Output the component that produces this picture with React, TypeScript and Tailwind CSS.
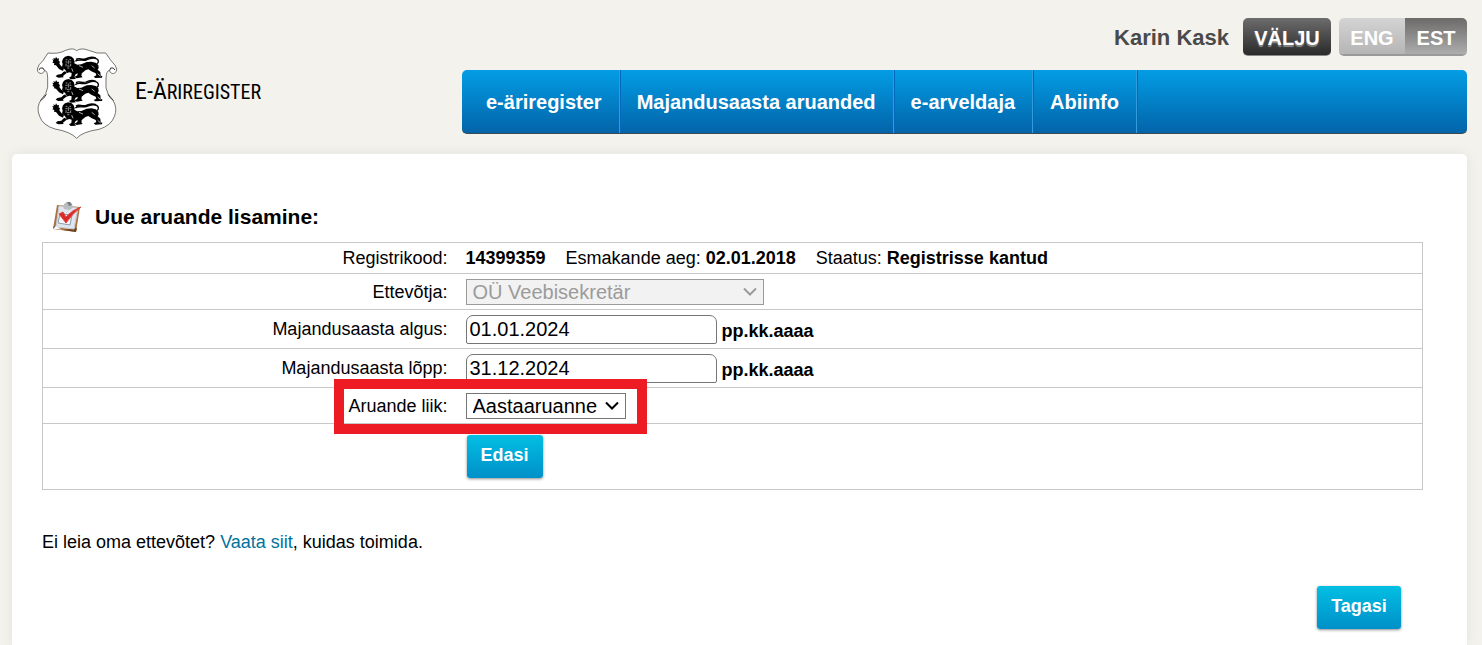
import type { ReactNode } from "react";

const navItems = ["e-äriregister", "Majandusaasta aruanded", "e-arveldaja", "Abiinfo"];

function Lion({ y }: { y: number }) {
  return (
    <g transform={`translate(0 ${y})`}>
      {/* raised paw and foreleg */}
      <path d="M67 46l5 1-2-6 6 3 2-6 4 6 5-1-1 7 4 3-2 6 6 8 8 5-3 9-12-6-9-11-6-1 1-5-6-2 3-4z" />
      {/* body and legs */}
      <path d="M100 68l14 12 12-8 4-16 12 6 12-1 16-7 14-1 13 3 8 7 1 9-3 5 8 7 1 11 5 1-1 5-20 1-5-4 8-4-2-6-13-6-9-6-9 3-9 8-3 8 4 5-18 3-7-4 9-5 1-6-6 3-4 8 5 6-16 1-5-5 7-4 1-10-7-2-9 3-10 8 2 4-16 1-8-4 5-5 12-2 7-7 8-3z" />
      {/* mane */}
      <path d="M99 44l6-6 10-3 10 3 6 6 3 9-2 7 2 8-6 6-6 6-7 4-7-4-6-6-6-6 2-8-2-7z" />
      <path d="M136 52c8-8 22-1 32-4 10-3 18-8 28-5 12 3 11 14 4 17M138 46c10-7 18 3 30-2 10-5 20-6 30-2" fill="none" stroke="#000" strokeWidth="4" />
      {/* face */}
      <path d="M107 47h5m6 0h5M106 54h6m6 0h6M115 49v12M108 59v8m14-8v8M111 66h8M112 72h6" fill="none" stroke="#ddd" strokeWidth="2" />
      <path d="M104 80l6 5m15-12l4 10m-56 10l10-3m64-25l12 5m26-5l9 7m-40 18l8-5m41 4l9 8" fill="none" stroke="#fff" strokeWidth="2" />
    </g>
  );
}

function CoatOfArms() {
  return (
    <svg viewBox="0 0 285 300" className="h-[100px] w-[95px] shrink-0" aria-hidden="true">
      <path
        d="M54 27Q85 31 107 19Q130 10 140 20Q154 10 176 19Q201 31 227 27L243 50Q259 65 260 75C260 92 240 93 239 79Q229 80 228 102V132Q231 151 248 167Q264 193 253 218Q243 245 207 256Q157 263 140 283Q122 263 75 255Q38 244 29 217Q17 190 34 166Q51 150 53 130V102Q53 80 43 79C41 93 21 91 22 75Q24 62 39 50Z"
        fill="#fff"
        stroke="#333"
        strokeWidth="2"
      />
      <path d="M27 78q2-9 12-6l4 7m212-1q-4-9-13-6l-3 7M31 170q11-6 18-19m201 18q-11-7-16-18" fill="none" stroke="#333" strokeWidth="3" />
      <Lion y={0} />
      <Lion y={70} />
      <Lion y={140} />
    </svg>
  );
}

function ClipboardIcon() {
  return (
    <svg viewBox="0 0 30 32" className="h-8 w-[30px] shrink-0" aria-hidden="true">
      <path d="M5 4L28 6L24 31L1 28Z" fill="#a87243" />
      <path d="M4 27L1 28L2 25ZM11 29L24 31L25 27Z" fill="#6f4422" />
      <path d="M7 5L26 7L22 28L4 26Z" fill="#dfe6f0" stroke="#c9ced6" />
      <path d="M4 25L10 29L6 28L1 28Z" fill="#f5f8fc" />
      <path d="M8 13L20 14L18 24L6 22Z" fill="#f4f6f9" stroke="#8f99a6" />
      <path d="M11 5L13 2Q18-1 20 3L21 6L18 9L12 8Z" fill="#b9bdc1" />
      <path d="M15 1h3l2 3-3 1z" fill="#777c80" />
      <path d="M7 13L11 11L14 16Q20 9 29 6Q20 13 14 22Z" fill="#d92a2a" stroke="#e2463f" strokeWidth="1" />
    </svg>
  );
}

function Chevron() {
  return (
    <svg
      viewBox="0 0 14 9"
      className="pointer-events-none absolute top-1/2 right-[7px] h-[9px] w-[14px] -translate-y-1/2"
      fill="none"
      stroke="currentColor"
      strokeWidth="2"
      aria-hidden="true"
    >
      <path d="M1 1L7 7L13 1" />
    </svg>
  );
}

function Row({ label, htmlFor, className, children }: { label?: string; htmlFor?: string; className: string; children: ReactNode }) {
  return (
    <tr className={className}>
      <th scope="row" className="w-[30%] border-y border-[#c8c8c8] pr-[9px] text-right font-normal">
        {label && <label htmlFor={htmlFor}>{label}</label>}
      </th>
      <td className="relative border-y border-[#c8c8c8] pl-[9px]">{children}</td>
    </tr>
  );
}

const dateInput =
  "h-[29px] w-[251px] rounded-t-[7px] rounded-b-xs border border-[#767676] bg-white px-[3px] text-xl leading-6";
const blueButton =
  "h-[43px] rounded-[3px] bg-linear-to-b from-[#04bfe3] to-[#0190c9] pb-[3px] font-bold text-white shadow-[0_1px_3px_rgba(0,0,0,0.45)]";

export default function App() {
  return (
    <div className="flex min-h-screen flex-col bg-[#f3f2ec] pr-[15px] pl-3 font-['Liberation_Sans',Arial,sans-serif] text-lg leading-6 text-black">
      <header className="flex">
        <a href="#" className="flex w-[450px] shrink-0 items-center pt-11 pb-[10px] pl-[18px] text-black">
          <CoatOfArms />
          <span className="ml-[10px] pb-[6px] font-['Roboto_Condensed',Roboto,sans-serif] text-xl">
            <span className="text-2xl">E-Ä</span>RIREGISTER
          </span>
        </a>
        <div className="min-w-0 flex-1">
          <div className="flex items-center justify-end pt-[18px] pb-[14px]">
            <span className="mr-[14px] pt-[2px] text-[22px] font-bold text-[#4a4a4a]">Karin Kask</span>
            <button className="mr-2 h-[38px] w-[88px] rounded-[5px] border-b border-[#888] bg-linear-to-b from-[#6d6d6d] to-[#2b2b2b] pt-[2px] text-xl font-bold text-white [text-shadow:0_2px_1px_#888]">
              VÄLJU
            </button>
            <div className="flex h-[38px] overflow-hidden rounded-[5px] border-b-2 border-[#999] text-xl font-bold text-white [text-shadow:0_2px_1px_#888]">
              <button className="w-[66px] bg-linear-to-b from-[#d4d4d4] to-[#b5b5b5] pt-[3px]">ENG</button>
              <button className="w-[62px] bg-linear-to-b from-[#6c6b6a] to-[#adadad] pt-[3px]">EST</button>
            </div>
          </div>
          <nav className="rounded-[5px] border-b border-[#3a4a55] bg-linear-to-b from-[#039de5] to-[#0364a9]">
            <ul className="flex h-[63px] pl-[7px] text-xl font-bold text-white">
              {navItems.map((item) => (
                <li key={item} className="flex border-r border-[#359bdc] shadow-[1px_0_0_#0566bd]">
                  <a href="#" className="flex items-center px-[17px] pt-px whitespace-nowrap">
                    {item}
                  </a>
                </li>
              ))}
            </ul>
          </nav>
        </div>
      </header>

      <main className="flex-1 rounded-t-[5px] bg-white pt-[47px] pr-11 pb-4 pl-[30px] shadow-[0_0_14px_rgba(0,0,0,0.07)]">
        <h1 className="mb-[9px] flex items-center gap-[13px] pl-[10px] text-[21px] font-bold">
          <ClipboardIcon />
          Uue aruande lisamine:
        </h1>
        <form>
          <table className="w-full border-collapse border border-[#c8c8c8]">
            <tbody>
              <Row label="Registrikood:" className="h-[31px]">
                <b className="mr-5">14399359</b>
                <span className="mr-5">
                  Esmakande aeg: <b>02.01.2018</b>
                </span>
                <span>
                  Staatus: <b>Registrisse kantud</b>
                </span>
              </Row>
              <Row label="Ettevõtja:" htmlFor="company" className="h-9">
                <div className="relative flex w-[298px] text-[#9b9b9b]">
                  <select
                    id="company"
                    disabled
                    className="h-[26px] w-full appearance-none border border-[#9b9b9b] bg-[#f2f2f2] pl-[6px] text-xl leading-6 opacity-100"
                  >
                    <option>OÜ Veebisekretär</option>
                  </select>
                  <Chevron />
                </div>
              </Row>
              <Row label="Majandusaasta algus:" htmlFor="start" className="h-[39px]">
                <div className="flex items-center gap-[5px]">
                  <input id="start" type="text" defaultValue="01.01.2024" className={dateInput} />
                  <b className="pt-[3px]">pp.kk.aaaa</b>
                </div>
              </Row>
              <Row label="Majandusaasta lõpp:" htmlFor="end" className="h-[39px]">
                <div className="flex items-center gap-[5px]">
                  <input id="end" type="text" defaultValue="31.12.2024" className={dateInput} />
                  <b className="pt-[3px]">pp.kk.aaaa</b>
                </div>
              </Row>
              <Row label="Aruande liik:" htmlFor="type" className="h-9">
                <div className="relative flex w-40">
                  <select
                    id="type"
                    className="h-[26px] w-full appearance-none border border-[#767676] bg-white pl-[6px] text-xl leading-6"
                  >
                    <option>Aastaaruanne</option>
                  </select>
                  <Chevron />
                </div>
                <div className="pointer-events-none absolute -top-[9px] -left-[123px] z-10 h-[55px] w-[313px] border-10 border-[#ed1c24]" />
              </Row>
              <Row className="h-[66px]">
                <button type="button" className={`${blueButton} ml-px w-[76px]`}>
                  Edasi
                </button>
              </Row>
            </tbody>
          </table>
        </form>
        <p className="mt-10">
          Ei leia oma ettevõtet?{" "}
          <a href="#" className="text-[#00739c]">
            Vaata siit
          </a>
          , kuidas toimida.
        </p>
        <div className="mt-8 flex justify-end pr-[22px]">
          <button type="button" className={`${blueButton} w-[84px]`}>
            Tagasi
          </button>
        </div>
      </main>
    </div>
  );
}
